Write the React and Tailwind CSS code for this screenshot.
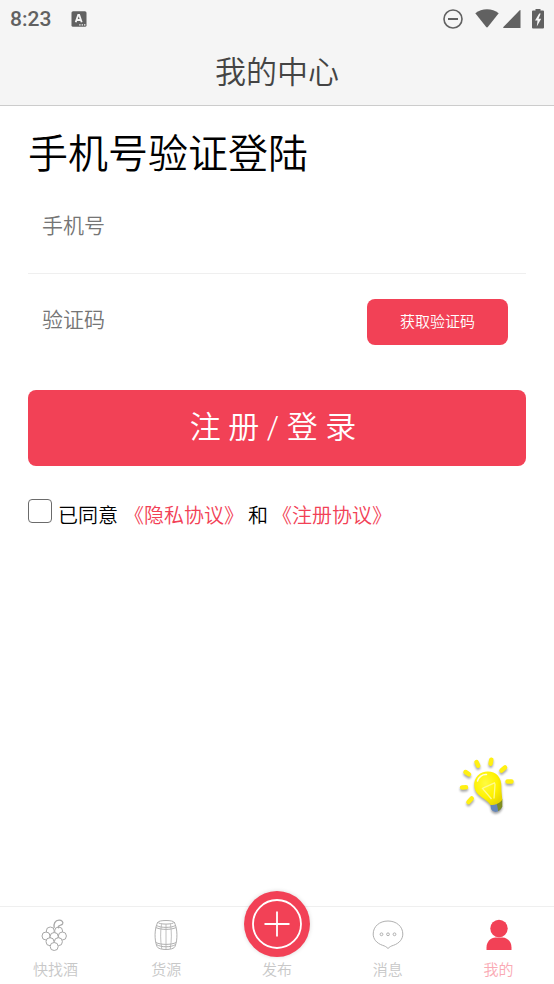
function StatusBar() {
    return (<div className="flex h-[38px] items-center justify-between pl-2.5 pr-2.5 text-[#616161]">
      <div className="flex items-center gap-5">
        <span className="text-[21px] font-medium leading-6">8:23</span>
        <svg width="16" height="16" viewBox="0 0 16 16" aria-hidden="true">
          <rect x="0.5" y="0.2" width="15" height="15.6" rx="1.6" fill="currentColor"/>
          <path d="M4.7 11.2 7.2 4h1l2.5 7.2M5.6 9h4.2" fill="none" stroke="#f5f5f5" strokeWidth="1.8"/>
          <path d="M8.2 13.8h1.4M10.6 13.8H12M13 13.8h1.4" stroke="#f5f5f5" strokeWidth="1.2"/>
        </svg>
      </div>
      <div className="flex items-center">
        <svg width="20" height="20" viewBox="0 0 20 20" fill="none" stroke="currentColor" aria-hidden="true">
          <circle cx="10" cy="10" r="9" strokeWidth="1.6"/>
          <path d="M5 10h10" strokeWidth="2"/>
        </svg>
        <svg className="ml-3" width="24" height="20" viewBox="0 0 24 20" fill="currentColor" aria-hidden="true">
          <path d="M.3 4.2C3.6 1.300 7.700.2 12 .2s8.400 1.100 11.700 4L13 17.800q-1 1.200-2 0z"/>
        </svg>
        <svg className="ml-1" width="18" height="20" viewBox="0 0 18 20" fill="currentColor" aria-hidden="true">
          <path d="M17.500 1.200V19H.6q-.8-.6 0-1.300L16.700 1.200q.5-.4.8 0z"/>
        </svg>
        <svg className="ml-[11px]" width="12" height="20" viewBox="0 0 12 20" aria-hidden="true">
          <path d="M3.500 0h5v1.500H11q1 0 1 1V18.500q0 1-1 1H1q-1 0-1-1V2.500q0-1 1-1h2.500z" fill="currentColor"/>
          <path d="M7.200 4.500 3 11.500h2.500L4.800 17.500 9.200 9.800H6.600L8.700 4.500z" fill="#f5f5f5"/>
        </svg>
      </div>
    </div>);
}

function GrapesIcon() {
    const berries = [[9.3, 12], [17.6, 12], [5, 17], [13.2, 17.5], [21.4, 17], [9, 22.7], [17.4, 22.7], [13.2, 27.5]];
    return (<svg width="28" height="32" viewBox="0 0 28 32" fill="none" stroke="#a8a8a8" strokeWidth="1" aria-hidden="true">
      {berries.map(([x, y]) => (<circle key={`${x}-${y}`} cx={x} cy={y} r="4" fill="#fff"/>))}
      <path d="M13.200 9C12.300 5 14 1.300 18 1.200c3-.1 4.500 2 3.600 3.600-.9 1.500-3 1.300-4 2.400-.6.700-.4 1.500.1 2" strokeWidth="1.300"/>
    </svg>);
}

function BarrelIcon() {
    return (<svg width="28" height="32" viewBox="0 0 28 32" fill="none" stroke="#b0b0b0" strokeWidth="1" aria-hidden="true">
      <ellipse cx="14" cy="3.300" rx="8" ry="1.800"/>
      <path d="M5.800 3C2.300 10 2.300 21 5 27.500c1.200 4 16.800 4 18 0 2.700-6.500 2.700-17.500-.8-24.500"/>
      <path d="M4.500 6.500c4 2.500 15 2.500 19 0M3.800 8.500c5 2.500 15.400 2.500 20.400 0M3.800 23.500c5 2.500 15.400 2.500 20.400 0M4.500 25.500c4 3 15 3 19 0"/>
      <path d="M9.500 5.200C8.300 12 8.300 22 9.800 30M14 5.300v25M18.500 5.200c1.200 6.800 1.200 16.800-.3 24.800" strokeWidth="0.800"/>
    </svg>);
}

function MessageIcon() {
    return (<svg width="32" height="32" viewBox="0 0 32 32" fill="none" stroke="#b0b0b0" strokeWidth="1" aria-hidden="true">
      <path d="M16 29.500c-1.500-1.500-3-2.500-5.500-3.200C4.500 24.200 1.200 20 1.200 15 1.200 7.500 7.500 2 16 2s14.800 5.500 14.800 13c0 5-3.300 9.200-9.300 11.300-2.500.7-4 1.700-5.500 3.200z"/>
      <circle cx="9.500" cy="15.300" r="1.400"/>
      <circle cx="16" cy="15.300" r="1.400"/>
      <circle cx="22.500" cy="15.300" r="1.400"/>
    </svg>);
}

function UserIcon() {
    return (<svg width="28" height="32" viewBox="0 0 28 32" fill="#f24156" aria-hidden="true">
      <circle cx="14" cy="9.500" r="8.700"/>
      <path d="M1.500 31V28.500c0-6 4.500-10 9-10h7c4.500 0 9 4 9 10v2.500z"/>
    </svg>);
}

function PublishIcon() {
    return (<svg width="66" height="66" viewBox="0 0 66 66" fill="none" stroke="#fff" aria-hidden="true">
      <circle cx="33" cy="33" r="24" strokeWidth="1.800"/>
      <path d="M20.500 33h25M33 20.500v25" strokeWidth="1.800"/>
    </svg>);
}

function BulbIcon() {
    return (<svg className="drop-shadow-[0_2px_1px_rgba(0,0,0,0.35)]" width="60" height="60" viewBox="0 0 60 60" aria-hidden="true">
      <defs>
        <radialGradient id="glass" cx="0.400" cy="0.350" r="0.700">
          <stop offset="0" stopColor="#fffb40"/>
          <stop offset="0.600" stopColor="#fff200"/>
          <stop offset="1" stopColor="#e9d800"/>
        </radialGradient>
      </defs>
      <g stroke="#fff012" strokeWidth="4.500" strokeLinecap="round">
        <path d="M19.500 8l1.700 3.700M34.300 5.700l-.7 4M48 13.500l-3.500 3M54.500 27.500h-4M8.500 18l3.500 2.300M5 33.500l4-.2M11.500 48l3.200-3.500"/>
      </g>
      <path d="M33 47 45 45.500V53q-2 4.500-6.500 5-3.500-.5-4.500-3z" fill="#6586b8"/>
      <path d="M39.500 48 45.300 45V52.500q-1.300 3.500-4 4.800z" fill="#7f8d22"/>
      <path d="M17.300 32C16.500 23.500 23 17.500 30.800 17.500 39 17.500 44.700 23.500 44.300 32c-.2 4 .6 9 1 13.500-2 3.500-6.300 5.500-11.800 5.500C29 43.500 18.300 43 17.300 32z" fill="url(#glass)"/>
      <path d="M20.500 27c1-4 5-7 9-6.500" fill="none" stroke="#fffde0" strokeWidth="1.500" strokeLinecap="round"/>
      <path d="M34.500 45 25.500 34.500l1.500-.8 10.500-4.700.5 1.500-1 14" fill="none" stroke="#fffa90" strokeWidth="1.300"/>
    </svg>);
}

const tabs = [
    { label: "快找酒", icon: <GrapesIcon /> },
    { label: "货源", icon: <BarrelIcon /> },
    { label: "发布", icon: <PublishIcon />, raised: true },
    { label: "消息", icon: <MessageIcon /> },
    { label: "我的", icon: <UserIcon />, active: true },
];

function TabBar() {
    return (<nav className="sticky bottom-0 grid h-[78px] grid-cols-5 border-t border-[#efefef] bg-white">
      {tabs.map((tab) => (<a key={tab.label} href="#" className="relative flex flex-col items-center justify-end pb-[3px]">
          {tab.raised ? (<span className="absolute -top-4 rounded-full bg-[#f24156] shadow-[0_0_4px_rgba(0,0,0,0.15)]">{tab.icon}</span>) : tab.icon}
          <span className={`mt-2 text-[15px] leading-[22px] ${tab.active ? "text-[#faa9b3]" : "text-[#c8c8c8]"}`}>
            {tab.label}
          </span>
        </a>))}
    </nav>);
}

export default function App() {
    return (<div className="flex min-h-screen flex-col bg-white font-['Roboto','Noto_Sans_CJK_SC_DemiLight','Noto_Sans_CJK_SC',sans-serif] font-[350] text-black" lang="zh-CN">
      <header className="border-b border-[#cccccc] bg-[#f5f5f5]">
        <StatusBar />
        <h1 className="flex h-[67px] items-center justify-center pt-[3px] text-[31px] leading-10 text-[#444444]">我的中心</h1>
      </header>

      <main className="flex-1 px-7 pt-[26px]">
        <h2 className="text-[40px] leading-[46px]">手机号验证登陆</h2>

        <form>
          <input type="tel" aria-label="手机号" placeholder="手机号" className="block h-24 w-full border-b border-[#efefef] px-3.5 text-[21px] outline-none placeholder:text-[#757575]"/>

          <div className="flex h-24 items-center pr-[18px]">
            <input type="text" aria-label="验证码" placeholder="验证码" className="h-[92px] min-w-0 flex-1 self-start px-3.5 text-[21px] outline-none placeholder:text-[#757575]"/>
            <button type="button" className="h-[46px] w-[141px] rounded-lg bg-[#f24156] text-[15px] text-white">获取验证码</button>
          </div>

          <button type="submit" className="mt-5 block h-[76px] w-full rounded-lg bg-[#f24156] pr-2 text-[31px] text-white">注 册 / 登 录</button>

          <div className="mt-7 flex items-center text-[20px] leading-10">
            <label className="flex items-center gap-1.5">
              <input type="checkbox" className="mb-2 size-6 appearance-none rounded border border-[#6b6b6b] bg-white checked:bg-[#f24156]"/>
              <span className="pt-0.5">已同意</span>
            </label>
            <div className="ml-1.5 flex gap-1 pt-0.5">
              <a href="#" className="text-[#f24156]">《隐私协议》</a>
              <span>和</span>
              <a href="#" className="text-[#f24156]">《注册协议》</a>
            </div>
          </div>
        </form>
      </main>

      {/* floating tips button */}
      <button type="button" aria-label="提示" className="fixed bottom-[170px] right-[37px]">
        <BulbIcon />
      </button>

      <TabBar />
    </div>);
}
